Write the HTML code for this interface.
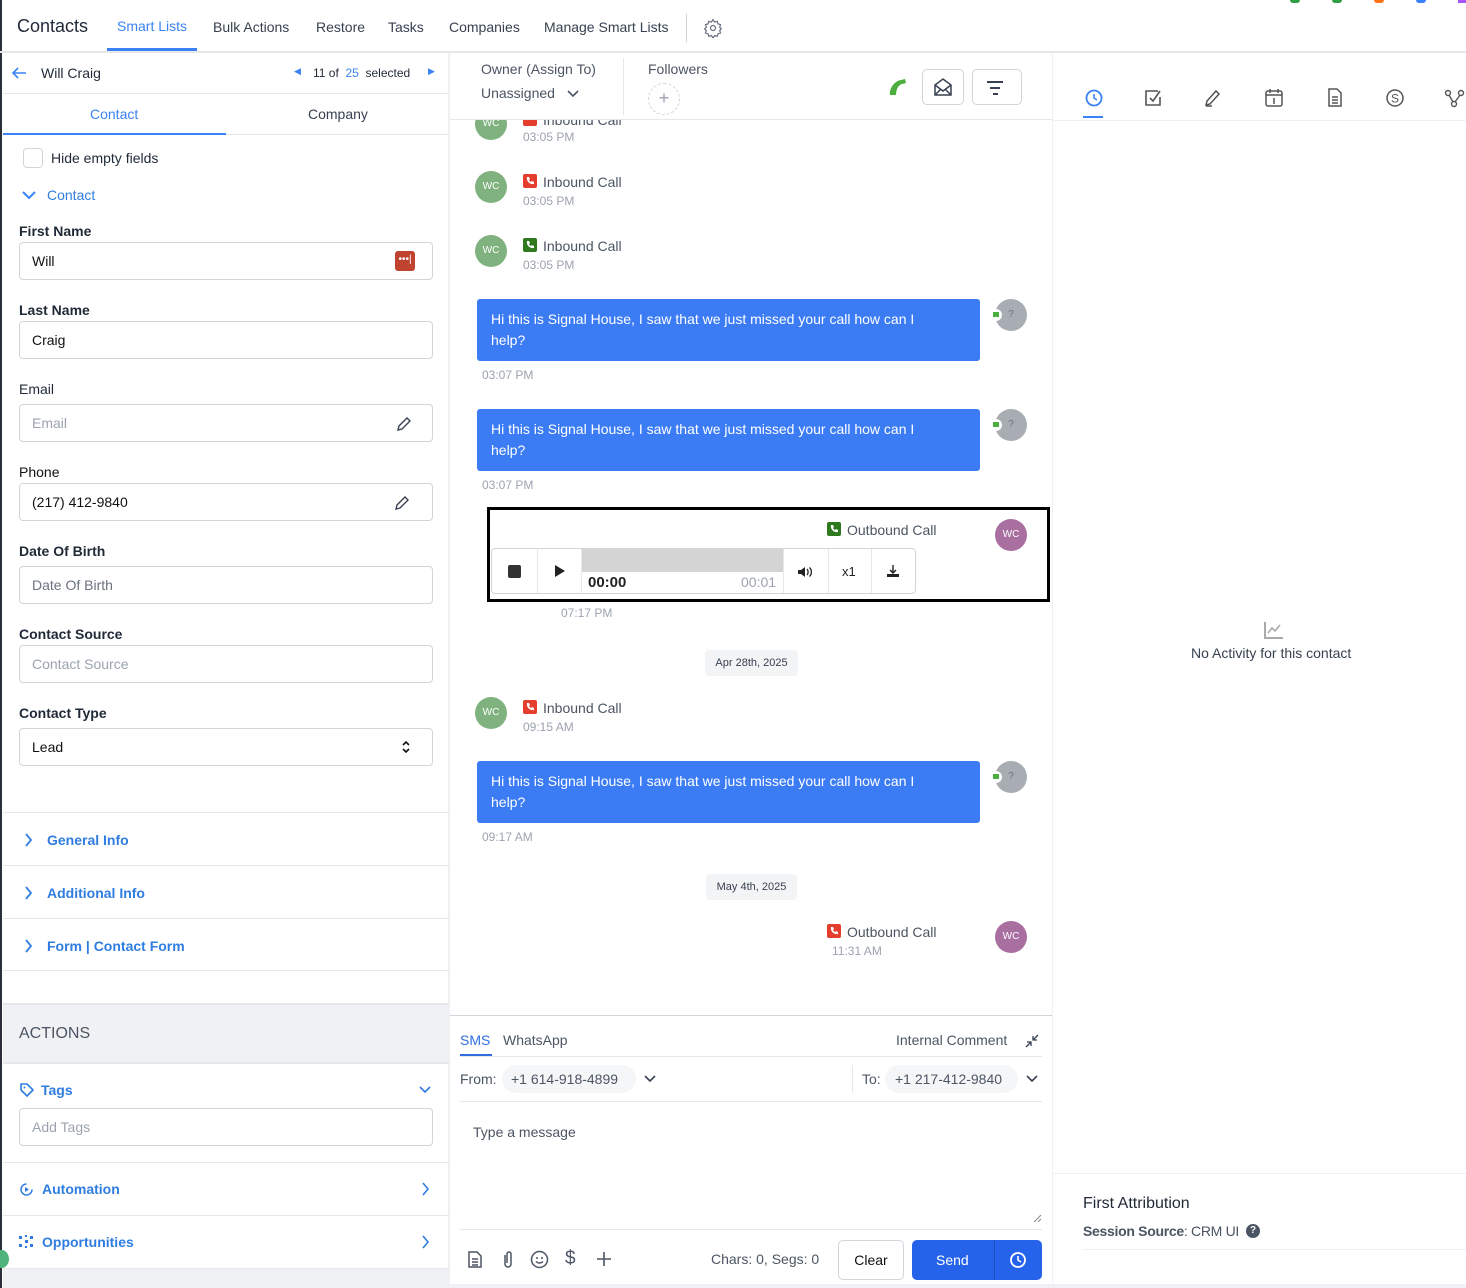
<!DOCTYPE html>
<html><head><meta charset="utf-8"><style>
*{box-sizing:border-box;margin:0;padding:0}
body{width:1466px;height:1288px;overflow:hidden;background:#fff;font-family:"Liberation Sans",sans-serif;color:#1f2937;position:relative}
.a{position:absolute}
.t{position:absolute;white-space:nowrap}
.lbl{font-size:14px;font-weight:bold;color:#1f2937}
.inp{position:absolute;left:19px;width:414px;height:38px;border:1px solid #d1d5db;border-radius:4px;font-size:14px;padding:0 12px;line-height:36px;color:#111}
.ph{color:#9ca3af}
.av{position:absolute;width:32px;height:32px;border-radius:50%;color:#fff;font-size:10px;text-align:center;line-height:32px}
.g{background:#7fb27f}.p{background:#a86fa0}
.ci{position:absolute;width:14px;height:14px;border-radius:2px}
.ci svg{position:absolute;left:2px;top:2px}
.red{background:#e53e2e}.grn{background:#2f7a1f}
.ct{font-size:14px;color:#4b5563}
.tm{font-size:12px;color:#9ca3af}
.bub{position:absolute;left:477px;width:503px;height:62px;background:#3b7cf5;border-radius:3px;color:#fff;font-size:14px;line-height:21px;padding:10px 60px 10px 14px}
.sec{position:absolute;left:3px;width:446px;border-top:1px solid #e5e7eb;font-size:14px;color:#2f7de1;font-weight:bold}
.blue{color:#2f7de1}
</style></head><body>
<svg width="0" height="0" style="position:absolute"><defs><symbol id="ph" viewBox="0 0 10 10"><path d="M2 1l2 0 1 2-1 1c.5 1 1 1.5 2 2l1-1 2 1v2c-4 1-8-3-7-7z" fill="#fff"/></symbol></defs></svg>
<div class="a" style="left:0;top:0;width:2px;height:1288px;background:#2b2f3a"></div>
<div class="a" style="left:0;top:51px;width:1466px;height:2px;background:#e5e7eb"></div>
<div class="t" style="left:17px;top:16px;font-size:18px;color:#1f2937">Contacts</div>
<div class="t" style="left:117px;top:18px;font-size:14px;color:#3b82f6">Smart Lists</div>
<div class="a" style="left:107px;top:48px;width:90px;height:3px;background:#3b82f6"></div>
<div class="t" style="left:213px;top:19px;font-size:14px;color:#374151">Bulk Actions</div>
<div class="t" style="left:316px;top:19px;font-size:14px;color:#374151">Restore</div>
<div class="t" style="left:388px;top:19px;font-size:14px;color:#374151">Tasks</div>
<div class="t" style="left:449px;top:19px;font-size:14px;color:#374151">Companies</div>
<div class="t" style="left:544px;top:19px;font-size:14px;color:#374151">Manage Smart Lists</div>
<div class="a" style="left:686px;top:14px;width:1px;height:28px;background:#d1d5db"></div>
<svg class="a" style="left:703px;top:18px" width="20" height="20" viewBox="0 0 24 24" fill="none" stroke="#6b7280" stroke-width="1.5"><circle cx="12" cy="12" r="3"/><path d="M12 2l2 3 3-1 1 3 3 1-1 3 2 2-2 2 1 3-3 1-1 3-3-1-2 3-2-3-3 1-1-3-3-1 1-3-2-2 2-2-1-3 3-1 1-3 3 1z"/></svg>
<div class="a" style="left:1290px;top:0;width:10px;height:3px;border-radius:0 0 5px 5px;background:#2f9e44"></div>
<div class="a" style="left:1332px;top:0;width:10px;height:3px;border-radius:0 0 5px 5px;background:#2f9e44"></div>
<div class="a" style="left:1374px;top:0;width:10px;height:3px;border-radius:0 0 5px 5px;background:#f97316"></div>
<div class="a" style="left:1416px;top:0;width:10px;height:3px;border-radius:0 0 5px 5px;background:#3b82f6"></div>
<div class="a" style="left:1458px;top:0;width:8px;height:3px;background:#a855f7"></div>

<!-- left panel -->
<div class="a" style="left:448px;top:53px;width:2px;height:1235px;background:#eef0f3"></div>
<svg class="a" style="left:11px;top:67px" width="16" height="12"><path d="M15 6H2M7 1L2 6l5 5" stroke="#3b82f6" stroke-width="1.6" fill="none"/></svg>
<div class="t" style="left:41px;top:65px;font-size:14px">Will Craig</div>
<div class="t" style="left:294px;top:66px;font-size:9px;color:#3b82f6">◀</div>
<div class="t" style="left:313px;top:66px;font-size:12px">11 of &nbsp;<span style="color:#3b82f6">25</span>&nbsp; selected</div>
<div class="t" style="left:428px;top:66px;font-size:9px;color:#3b82f6">▶</div>
<div class="a" style="left:3px;top:93px;width:445px;height:1px;background:#e5e7eb"></div>
<div class="t" style="left:90px;top:106px;font-size:14px;color:#3b82f6">Contact</div>
<div class="t" style="left:308px;top:106px;font-size:14px;color:#374151">Company</div>
<div class="a" style="left:3px;top:133px;width:223px;height:2px;background:#3b82f6"></div>
<div class="a" style="left:226px;top:134px;width:222px;height:1px;background:#e5e7eb"></div>
<div class="a" style="left:23px;top:148px;width:20px;height:20px;border:1px solid #d1d5db;border-radius:4px"></div>
<div class="t" style="left:51px;top:150px;font-size:14px">Hide empty fields</div>
<svg class="a" style="left:21px;top:189px" width="16" height="12"><path d="M2 3l6 6 6-6" stroke="#3b82f6" stroke-width="2" fill="none"/></svg>
<div class="t blue" style="left:47px;top:187px;font-size:14px">Contact</div>
<div class="t lbl" style="left:19px;top:223px">First Name</div>
<div class="inp" style="top:242px">Will</div>
<div class="a" style="left:395px;top:251px;width:20px;height:20px;background:#c0432f;border-radius:3px;color:#fff;font-size:10px;text-align:center;line-height:18px">•••|</div>
<div class="t lbl" style="left:19px;top:302px">Last Name</div>
<div class="inp" style="top:321px">Craig</div>
<div class="t" style="left:19px;top:381px;font-size:14px">Email</div>
<div class="inp ph" style="top:404px">Email</div>
<svg class="a" style="left:396px;top:416px" width="16" height="16"><path d="M2 14l1-4 8-8 3 3-8 8z" stroke="#374151" stroke-width="1.4" fill="none"/></svg>
<div class="t" style="left:19px;top:464px;font-size:14px;color:#111">Phone</div>
<div class="inp" style="top:483px">(217) 412-9840</div>
<svg class="a" style="left:394px;top:495px" width="16" height="16"><path d="M2 14l1-4 8-8 3 3-8 8z" stroke="#374151" stroke-width="1.4" fill="none"/></svg>
<div class="t lbl" style="left:19px;top:543px">Date Of Birth</div>
<div class="inp" style="top:566px;color:#6b7280">Date Of Birth</div>
<div class="t lbl" style="left:19px;top:626px">Contact Source</div>
<div class="inp ph" style="top:645px">Contact Source</div>
<div class="t lbl" style="left:19px;top:705px">Contact Type</div>
<div class="inp" style="top:728px">Lead</div>
<svg class="a" style="left:401px;top:740px" width="10" height="14"><path d="M2 5l3-3 3 3M2 9l3 3 3-3" stroke="#111" stroke-width="1.6" fill="none"/></svg>
<div class="sec" style="top:812px;height:53px"><svg class="a" style="left:20px;top:19px" width="10" height="16"><path d="M3 2l5 6-5 6" stroke="#2f7de1" stroke-width="1.8" fill="none"/></svg><span class="t" style="left:44px;top:19px">General Info</span></div>
<div class="sec" style="top:865px;height:53px"><svg class="a" style="left:20px;top:19px" width="10" height="16"><path d="M3 2l5 6-5 6" stroke="#2f7de1" stroke-width="1.8" fill="none"/></svg><span class="t" style="left:44px;top:19px">Additional Info</span></div>
<div class="sec" style="top:918px;height:53px;border-bottom:1px solid #e5e7eb"><svg class="a" style="left:20px;top:19px" width="10" height="16"><path d="M3 2l5 6-5 6" stroke="#2f7de1" stroke-width="1.8" fill="none"/></svg><span class="t" style="left:44px;top:19px">Form | Contact Form</span></div>
<div class="a" style="left:3px;top:1003px;width:446px;height:61px;background:#f0f1f5;border-top:2px solid #e5e7eb;border-bottom:2px solid #e5e7eb"></div>
<div class="t" style="left:19px;top:1025px;font-size:16px;color:#4b5563">ACTIONS</div>
<svg class="a" style="left:19px;top:1082px" width="16" height="16"><path d="M2 2h6l6 6-6 6-6-6z" stroke="#2f7de1" stroke-width="1.6" fill="none" stroke-linejoin="round"/><circle cx="5.5" cy="5.5" r="1" fill="#2f7de1"/></svg>
<div class="t blue" style="left:41px;top:1082px;font-size:14px;font-weight:bold">Tags</div>
<svg class="a" style="left:418px;top:1085px" width="14" height="10"><path d="M2 2l5 5 5-5" stroke="#2f7de1" stroke-width="1.6" fill="none"/></svg>
<div class="inp ph" style="top:1108px">Add Tags</div>
<div class="a" style="left:3px;top:1162px;width:446px;height:1px;background:#e5e7eb"></div>
<svg class="a" style="left:19px;top:1182px" width="15" height="15"><path d="M13 7.5A5.5 5.5 0 1 1 7.5 2" stroke="#2f7de1" stroke-width="1.5" fill="none"/><path d="M6 5l4 2.5-4 2.5z" fill="#2f7de1"/></svg>
<div class="t blue" style="left:42px;top:1181px;font-size:14px;font-weight:bold">Automation</div>
<svg class="a" style="left:420px;top:1181px" width="10" height="16"><path d="M3 2l5 6-5 6" stroke="#2f7de1" stroke-width="1.6" fill="none"/></svg>
<div class="a" style="left:3px;top:1215px;width:446px;height:1px;background:#e5e7eb"></div>
<svg class="a" style="left:19px;top:1235px" width="15" height="14" fill="#2f7de1"><rect x="0" y="1" width="3" height="3"/><rect x="0" y="9" width="3" height="3"/><rect x="11" y="1" width="3" height="3"/><rect x="11" y="9" width="3" height="3"/><rect x="6" y="5" width="3" height="3"/><rect x="6" y="0" width="2" height="2"/><rect x="6" y="11" width="2" height="2"/></svg>
<div class="t blue" style="left:42px;top:1234px;font-size:14px;font-weight:bold">Opportunities</div>
<svg class="a" style="left:420px;top:1234px" width="10" height="16"><path d="M3 2l5 6-5 6" stroke="#2f7de1" stroke-width="1.6" fill="none"/></svg>
<div class="a" style="left:3px;top:1268px;width:446px;height:20px;background:#f0f1f5;border-top:1px solid #e5e7eb"></div>
<div class="a" style="left:-6px;top:1250px;width:15px;height:18px;border-radius:50%;background:#4fb37d"></div>

<!-- middle header -->
<div class="t" style="left:481px;top:61px;font-size:14px;color:#4b5563">Owner (Assign To)</div>
<div class="t" style="left:481px;top:85px;font-size:14px;color:#4b5563">Unassigned</div>
<svg class="a" style="left:566px;top:89px" width="14" height="10"><path d="M2 2l5 5 5-5" stroke="#4b5563" stroke-width="1.6" fill="none"/></svg>
<div class="a" style="left:623px;top:58px;width:1px;height:57px;background:#e5e7eb"></div>
<div class="t" style="left:648px;top:61px;font-size:14px;color:#4b5563">Followers</div>
<div class="a" style="left:648px;top:83px;width:32px;height:32px;border:1px dashed #d1d5db;border-radius:50%;text-align:center;line-height:28px;color:#9ca3af;font-size:18px">+</div>
<svg class="a" style="left:887px;top:77px" width="22" height="20"><path d="M3 18c-1-6 4-14 11-15l4-1 1 4-4 1c-4 1-6 6-6 11z" fill="#4caf3d"/></svg>
<div class="a" style="left:922px;top:69px;width:42px;height:36px;border:1px solid #d1d5db;border-radius:5px"></div>
<svg class="a" style="left:933px;top:77px" width="20" height="20"><path d="M2 8l8-6 8 6v10H2z M2 8l8 6 8-6 M2 18l6-6 M18 18l-6-6" stroke="#374151" stroke-width="1.5" fill="none"/></svg>
<div class="a" style="left:972px;top:69px;width:50px;height:36px;border:1px solid #d1d5db;border-radius:5px"></div>
<div class="a" style="left:987px;top:81px;width:16px;height:2px;background:#374151"></div>
<div class="a" style="left:990px;top:87px;width:10px;height:2px;background:#374151"></div>
<div class="a" style="left:993px;top:93px;width:5px;height:2px;background:#374151"></div>
<div class="a" style="left:450px;top:119px;width:602px;height:1px;background:#e5e7eb"></div>
<div class="a" style="left:1052px;top:53px;width:1px;height:1235px;background:#eef0f3"></div>

<!-- chat -->
<div class="a" style="left:450px;top:120px;width:602px;height:895px;overflow:hidden">
 <div class="av g" style="left:25px;top:-12px">WC</div><div class="ci red" style="left:73px;top:-8px"></div>
 <div class="t ct" style="left:93px;top:-8px">Inbound Call</div>
 <div class="t tm" style="left:73px;top:10px">03:05 PM</div>
</div>
<div class="av g" style="left:475px;top:171px">WC</div><div class="ci red" style="left:523px;top:174px"><svg width="10" height="10"><use href="#ph"/></svg></div>
<div class="t ct" style="left:543px;top:174px">Inbound Call</div><div class="t tm" style="left:523px;top:194px">03:05 PM</div>
<div class="av g" style="left:475px;top:235px">WC</div><div class="ci grn" style="left:523px;top:238px"><svg width="10" height="10"><use href="#ph"/></svg></div>
<div class="t ct" style="left:543px;top:238px">Inbound Call</div><div class="t tm" style="left:523px;top:258px">03:05 PM</div>

<div class="bub" style="top:299px">Hi this is Signal House, I saw that we just missed your call how can I help?</div>
<div class="av" style="left:995px;top:299px;background:#a8adb3;color:#6b7280">?</div>
<div class="a" style="left:990px;top:309px;width:12px;height:12px;border-radius:50%;background:#fff"><div class="a" style="left:3px;top:3px;width:6px;height:5px;background:#4caf3d"></div></div>
<div class="t tm" style="left:482px;top:368px">03:07 PM</div>

<div class="bub" style="top:409px">Hi this is Signal House, I saw that we just missed your call how can I help?</div>
<div class="av" style="left:995px;top:409px;background:#a8adb3;color:#6b7280">?</div>
<div class="a" style="left:990px;top:419px;width:12px;height:12px;border-radius:50%;background:#fff"><div class="a" style="left:3px;top:3px;width:6px;height:5px;background:#4caf3d"></div></div>
<div class="t tm" style="left:482px;top:478px">03:07 PM</div>

<div class="a" style="left:487px;top:507px;width:563px;height:95px;border:3px solid #000"></div>
<div class="ci grn" style="left:827px;top:522px"><svg width="10" height="10"><use href="#ph"/></svg></div>
<div class="t ct" style="left:847px;top:522px">Outbound Call</div>
<div class="av p" style="left:995px;top:519px">WC</div>
<div class="a" style="left:491px;top:548px;width:425px;height:46px;border:1px solid #d1d5db;border-radius:4px;overflow:hidden">
 <div class="a" style="left:45px;top:0;width:1px;height:46px;background:#e5e7eb"></div>
 <div class="a" style="left:16px;top:16px;width:13px;height:13px;background:#333;border-radius:2px"></div>
 <svg class="a" style="left:62px;top:15px" width="12" height="14"><path d="M1 1l10 6-10 6z" fill="#222"/></svg>
 <div class="a" style="left:89px;top:0;width:1px;height:46px;background:#e5e7eb"></div>
 <div class="a" style="left:90px;top:0;width:201px;height:23px;background:#d4d4d4"></div>
 <div class="t" style="left:96px;top:25px;font-size:15px;font-weight:bold;color:#222">00:00</div>
 <div class="t" style="left:249px;top:25px;font-size:14px;color:#9ca3af">00:01</div>
 <div class="a" style="left:291px;top:0;width:1px;height:46px;background:#e5e7eb"></div>
 <svg class="a" style="left:305px;top:16px" width="16" height="14"><path d="M1 5h3l4-3v10l-4-3H1z" fill="#222"/><path d="M10 4c1.5 1.5 1.5 4.5 0 6M12.5 2.5c2.5 2.5 2.5 6.5 0 9" stroke="#222" stroke-width="1.3" fill="none"/></svg>
 <div class="a" style="left:336px;top:0;width:1px;height:46px;background:#e5e7eb"></div>
 <div class="t" style="left:350px;top:15px;font-size:13px;color:#222">x1</div>
 <div class="a" style="left:379px;top:0;width:1px;height:46px;background:#e5e7eb"></div>
 <svg class="a" style="left:394px;top:15px" width="14" height="15"><path d="M7 1v8M4 6l3 3 3-3" stroke="#222" stroke-width="1.4" fill="none"/><path d="M1 10h12v3H1z" fill="#222"/></svg>
</div>
<div class="t tm" style="left:561px;top:606px">07:17 PM</div>

<div class="a" style="left:705px;top:650px;width:93px;height:26px;background:#f3f4f6;border-radius:4px;font-size:11px;text-align:center;line-height:26px;color:#374151">Apr 28th, 2025</div>
<div class="av g" style="left:475px;top:697px">WC</div><div class="ci red" style="left:523px;top:700px"><svg width="10" height="10"><use href="#ph"/></svg></div>
<div class="t ct" style="left:543px;top:700px">Inbound Call</div><div class="t tm" style="left:523px;top:720px">09:15 AM</div>

<div class="bub" style="top:761px">Hi this is Signal House, I saw that we just missed your call how can I help?</div>
<div class="av" style="left:995px;top:761px;background:#a8adb3;color:#6b7280">?</div>
<div class="a" style="left:990px;top:771px;width:12px;height:12px;border-radius:50%;background:#fff"><div class="a" style="left:3px;top:3px;width:6px;height:5px;background:#4caf3d"></div></div>
<div class="t tm" style="left:482px;top:830px">09:17 AM</div>

<div class="a" style="left:706px;top:874px;width:91px;height:26px;background:#f3f4f6;border-radius:4px;font-size:11px;text-align:center;line-height:26px;color:#374151">May 4th, 2025</div>
<div class="ci red" style="left:827px;top:924px"><svg width="10" height="10"><use href="#ph"/></svg></div>
<div class="t ct" style="left:847px;top:924px">Outbound Call</div>
<div class="t tm" style="left:832px;top:944px">11:31 AM</div>
<div class="av p" style="left:995px;top:921px">WC</div>

<!-- composer -->
<div class="a" style="left:450px;top:1015px;width:602px;height:1px;background:#d1d5db"></div>
<div class="t" style="left:460px;top:1032px;font-size:14px;color:#2f6fe0">SMS</div>
<div class="a" style="left:460px;top:1054px;width:32px;height:2px;background:#2f6fe0"></div>
<div class="t" style="left:503px;top:1032px;font-size:14px;color:#4b5563">WhatsApp</div>
<div class="t" style="left:896px;top:1032px;font-size:14px;color:#4b5563">Internal Comment</div>
<svg class="a" style="left:1024px;top:1033px" width="16" height="16"><path d="M14 2l-5 5M9 3v4h4M2 14l5-5M3 9h4v4" stroke="#374151" stroke-width="1.3" fill="none"/></svg>
<div class="a" style="left:460px;top:1056px;width:582px;height:1px;background:#e5e7eb"></div>
<div class="t" style="left:460px;top:1071px;font-size:14px;color:#4b5563">From:</div>
<div class="a" style="left:502px;top:1065px;width:134px;height:28px;background:#f5f6f8;border-radius:14px"></div>
<div class="t" style="left:511px;top:1071px;font-size:14px;color:#4b5563">+1 614-918-4899</div>
<svg class="a" style="left:643px;top:1074px" width="14" height="10"><path d="M2 2l5 5 5-5" stroke="#374151" stroke-width="1.6" fill="none"/></svg>
<div class="a" style="left:852px;top:1065px;width:1px;height:28px;background:#e5e7eb"></div>
<div class="t" style="left:862px;top:1071px;font-size:14px;color:#4b5563">To:</div>
<div class="a" style="left:885px;top:1065px;width:133px;height:28px;background:#f5f6f8;border-radius:14px"></div>
<div class="t" style="left:895px;top:1071px;font-size:14px;color:#4b5563">+1 217-412-9840</div>
<svg class="a" style="left:1025px;top:1074px" width="14" height="10"><path d="M2 2l5 5 5-5" stroke="#374151" stroke-width="1.6" fill="none"/></svg>
<div class="a" style="left:460px;top:1101px;width:582px;height:1px;background:#e5e7eb"></div>
<div class="t" style="left:473px;top:1124px;font-size:14px;color:#4b5563">Type a message</div>
<svg class="a" style="left:1032px;top:1213px" width="10" height="10"><path d="M9 2L2 9M9 6L6 9" stroke="#888" stroke-width="1"/></svg>
<div class="a" style="left:460px;top:1229px;width:582px;height:1px;background:#e5e7eb"></div>
<svg class="a" style="left:467px;top:1250px" width="16" height="19"><path d="M2 2h8l4 4v11H2z M5 9h6M5 12h6M5 15h6" stroke="#4b5563" stroke-width="1.5" fill="none"/></svg>
<svg class="a" style="left:501px;top:1250px" width="14" height="19"><path d="M4 5v9a3 3 0 0 0 6 0V4a2 2 0 0 0-4 0v9" stroke="#4b5563" stroke-width="1.5" fill="none"/></svg>
<svg class="a" style="left:530px;top:1250px" width="19" height="19"><circle cx="9.5" cy="9.5" r="8" stroke="#4b5563" stroke-width="1.5" fill="none"/><circle cx="7" cy="8" r="1" fill="#4b5563"/><circle cx="12" cy="8" r="1" fill="#4b5563"/><path d="M6 11.5c2 2 5 2 7 0" stroke="#4b5563" stroke-width="1.4" fill="none"/></svg>
<div class="t" style="left:565px;top:1248px;font-size:19px;color:#4b5563">$</div>
<svg class="a" style="left:597px;top:1252px" width="14" height="14"><path d="M7 0v14M0 7h14" stroke="#4b5563" stroke-width="1.6"/></svg>
<div class="t" style="left:711px;top:1251px;font-size:14px;color:#4b5563">Chars: 0, Segs: 0</div>
<div class="a" style="left:838px;top:1240px;width:66px;height:40px;border:1px solid #d1d5db;border-radius:5px;font-size:14px;text-align:center;line-height:38px;color:#111">Clear</div>
<div class="a" style="left:912px;top:1240px;width:130px;height:40px;background:#2563eb;border-radius:5px"></div>
<div class="t" style="left:936px;top:1252px;font-size:14px;color:#fff">Send</div>
<div class="a" style="left:994px;top:1240px;width:1px;height:40px;background:#1e4fc0"></div>
<svg class="a" style="left:1009px;top:1251px" width="18" height="18"><circle cx="9" cy="9" r="7" stroke="#fff" stroke-width="1.8" fill="none"/><path d="M9 5v4l3 2" stroke="#fff" stroke-width="1.6" fill="none"/></svg>
<div class="a" style="left:450px;top:1284px;width:602px;height:4px;background:#f0f1f5"></div>

<!-- right panel -->
<svg class="a" style="left:1084px;top:88px" width="20" height="20"><circle cx="10" cy="10" r="7.5" stroke="#3b82f6" stroke-width="1.8" fill="none"/><path d="M10 6v4l3 2" stroke="#3b82f6" stroke-width="1.6" fill="none"/></svg>
<div class="a" style="left:1083px;top:116px;width:20px;height:2px;background:#3b82f6"></div>
<svg class="a" style="left:1143px;top:88px" width="20" height="20"><path d="M15 3H3v14h14V9" stroke="#555" stroke-width="1.6" fill="none"/><path d="M7 10l3 3 7-10" stroke="#555" stroke-width="1.6" fill="none"/></svg>
<svg class="a" style="left:1203px;top:88px" width="20" height="20"><path d="M3 17l1-4 9-10 3 3-9 10z M3 18h6" stroke="#555" stroke-width="1.5" fill="none"/></svg>
<svg class="a" style="left:1264px;top:87px" width="20" height="21"><rect x="2" y="4" width="16" height="15" rx="2" stroke="#555" stroke-width="1.5" fill="none"/><path d="M2 8h16M6 2v4M14 2v4M10 11v6" stroke="#555" stroke-width="1.5"/></svg>
<svg class="a" style="left:1325px;top:87px" width="20" height="21"><path d="M4 2h8l4 4v13H4z M7 10h6M7 13h6M7 16h6" stroke="#555" stroke-width="1.5" fill="none"/></svg>
<svg class="a" style="left:1385px;top:88px" width="20" height="20"><circle cx="10" cy="10" r="8" stroke="#555" stroke-width="1.5" fill="none"/><text x="10" y="14.5" font-size="12" text-anchor="middle" fill="#555" font-family="Liberation Sans">S</text></svg>
<svg class="a" style="left:1444px;top:88px" width="22" height="20"><circle cx="4" cy="5" r="2.5" stroke="#555" stroke-width="1.4" fill="none"/><circle cx="17" cy="5" r="2.5" stroke="#555" stroke-width="1.4" fill="none"/><circle cx="10" cy="16" r="2.5" stroke="#555" stroke-width="1.4" fill="none"/><path d="M5 7l4 7M16 7l-5 7" stroke="#555" stroke-width="1.4"/></svg>
<div class="a" style="left:1053px;top:120px;width:413px;height:1px;background:#eef0f3"></div>
<svg class="a" style="left:1263px;top:620px" width="22" height="20"><path d="M2 2v16h18" stroke="#aaa" stroke-width="2" fill="none"/><path d="M5 13l4-5 3 3 5-6" stroke="#aaa" stroke-width="1.6" fill="none"/></svg>
<div class="t" style="left:1191px;top:645px;font-size:14px;color:#374151">No Activity for this contact</div>
<div class="a" style="left:1053px;top:1173px;width:413px;height:1px;background:#eef0f3"></div>
<div class="t" style="left:1083px;top:1195px;font-size:16px;color:#1f2937">First Attribution</div>
<div class="t" style="left:1083px;top:1223px;font-size:14px;color:#4b5563;letter-spacing:-0.3px"><b>Session Source</b>: CRM UI</div>
<div class="a" style="left:1246px;top:1224px;width:14px;height:14px;border-radius:50%;background:#4b5563;color:#fff;font-size:10px;text-align:center;line-height:14px;font-weight:bold">?</div>
<div class="a" style="left:1083px;top:1249px;width:383px;height:1px;background:#eef0f3"></div>
<div class="a" style="left:1053px;top:1284px;width:413px;height:4px;background:#f0f1f5"></div>
</body></html>
